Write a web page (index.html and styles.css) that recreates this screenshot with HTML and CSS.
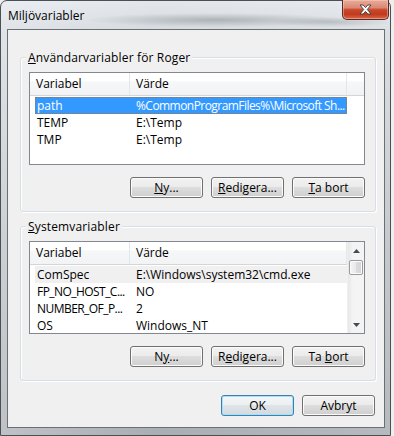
FILE: index.html
```html
<!DOCTYPE html>
<html lang="sv">
<head>
    <meta charset="UTF-8">
    <title>Miljövariabler</title>
    <link rel="stylesheet" href="styles.css">
</head>
<body>
    <div class="window">
        <div class="titlebar">
            <span class="title">Miljövariabler</span>
            <div class="close-button">
                <svg width="13" height="11" viewBox="0 0 13 11">
                    <polygon points="1,1 4.2,1 6.5,3.6 8.8,1 12,1 8.3,5.5 12,10 8.8,10 6.5,7.4 4.2,10 1,10 4.7,5.5" fill="#fff" stroke="#3a3a3a" stroke-width="0.9" stroke-linejoin="round"/>
                </svg>
            </div>
        </div>

        <div class="client">
            <div class="group">
                <div class="group-label"><u>A</u>nvändarvariabler för Roger</div>
                <div class="list">
                    <div class="list-main">
                        <div class="list-header">
                            <span class="head-cell head-name">Variabel</span>
                            <span class="head-cell head-value">Värde</span>
                            <span class="head-cell head-fill"></span>
                        </div>
                        <div class="rows">
                            <div class="row selected"><span class="cell-name">path</span><span class="cell-value tight">%CommonProgramFiles%\Microsoft Sh...</span></div>
                            <div class="row"><span class="cell-name">TEMP</span><span class="cell-value">E:\Temp</span></div>
                            <div class="row"><span class="cell-name">TMP</span><span class="cell-value">E:\Temp</span></div>
                        </div>
                    </div>
                </div>
                <div class="buttons">
                    <button class="btn"><u>N</u>y...</button>
                    <button class="btn"><u>R</u>edigera...</button>
                    <button class="btn"><u>T</u>a bort</button>
                </div>
            </div>

            <div class="group second">
                <div class="group-label"><u>S</u>ystemvariabler</div>
                <div class="list">
                    <div class="list-main">
                        <div class="list-header">
                            <span class="head-cell head-name">Variabel</span>
                            <span class="head-cell head-value">Värde</span>
                        </div>
                        <div class="rows">
                            <div class="row inactive"><span class="cell-name">ComSpec</span><span class="cell-value">E:\Windows\system32\cmd.exe</span></div>
                            <div class="row"><span class="cell-name tight">FP_NO_HOST_C...</span><span class="cell-value">NO</span></div>
                            <div class="row"><span class="cell-name tight">NUMBER_OF_P...</span><span class="cell-value">2</span></div>
                            <div class="row"><span class="cell-name">OS</span><span class="cell-value">Windows_NT</span></div>
                        </div>
                    </div>
                    <div class="scrollbar">
                        <div class="scroll-arrow">
                            <svg width="7" height="4" viewBox="0 0 7 4"><polygon points="0,4 3.5,0 7,4" fill="#4a4a4a"/></svg>
                        </div>
                        <div class="scroll-track">
                            <div class="scroll-thumb"></div>
                        </div>
                        <div class="scroll-arrow">
                            <svg width="7" height="4" viewBox="0 0 7 4"><polygon points="0,0 7,0 3.5,4" fill="#4a4a4a"/></svg>
                        </div>
                    </div>
                </div>
                <div class="buttons">
                    <button class="btn">N<u>y</u>...</button>
                    <button class="btn">R<u>e</u>digera...</button>
                    <button class="btn">Ta <u>b</u>ort</button>
                </div>
            </div>

            <div class="dialog-buttons">
                <button class="btn default">OK</button>
                <button class="btn">Avbryt</button>
            </div>
        </div>
    </div>
</body>
</html>
```

FILE: styles.css
```css
* {
    margin: 0;
    padding: 0;
    box-sizing: border-box;
}

body {
    width: 394px;
    height: 436px;
    overflow: hidden;
    background: #eeeeee;
    font-family: "Open Sans", "Noto Sans", sans-serif;
    font-size: 12px;
    color: #000;
}

u {
    text-decoration: underline;
    text-underline-offset: 1px;
}

/* window frame */

.window {
    width: 391px;
    height: 436px;
    border: 1px solid #4b5056;
    border-radius: 7px 7px 0 0;
    background:
        linear-gradient(to right, rgba(255, 255, 255, 0.25), rgba(255, 255, 255, 0) 40%, rgba(255, 255, 255, 0.15) 100%),
        linear-gradient(to bottom, #e3e7ec 0px, #d6dbe0 28px, #bcc1c6 55%, #a9aeb3 100%);
    display: flex;
    flex-direction: column;
}

.titlebar {
    height: 28px;
    display: flex;
    justify-content: space-between;
    align-items: flex-start;
    padding-left: 7px;
    background:
        radial-gradient(ellipse 130px 7px at 215px 19px, rgba(90, 95, 100, 0.35), rgba(90, 95, 100, 0)),
        radial-gradient(ellipse 60px 5px at 330px 21px, rgba(90, 95, 100, 0.25), rgba(90, 95, 100, 0));
    border-radius: 6px 6px 0 0;
}

.title {
    line-height: 29px;
    font-size: 12px;
    color: #000;
}

.close-button {
    width: 47px;
    height: 20px;
    margin-top: -1px;
    margin-right: 1px;
    border: 1px solid #5c2a20;
    border-top: none;
    border-radius: 0 0 5px 5px;
    background: linear-gradient(to bottom, #e9ab99 0%, #db8a74 40%, #c8462a 52%, #c23a1e 75%, #d9684a 100%);
    box-shadow: inset 0 0 0 1px rgba(255, 210, 200, 0.45);
    display: flex;
    align-items: center;
    justify-content: center;
}

.client {
    height: 399px;
    margin: 0 5px 0 6px;
    border: 1px solid #6a6f75;
    background: #f0f0f0;
    display: flex;
    flex-direction: column;
}

/* group boxes */

.group {
    margin: 27px 8px 0 12px;
    border: 1px solid #d5dfe5;
    border-radius: 3px;
    box-shadow: inset 1px 1px 0 #fff, 1px 1px 0 #fff;
    padding: 0 10px 13px 8px;
}

.group.second {
    margin-top: 14px;
}

.group-label {
    width: fit-content;
    margin: -8px 0 0 -3px;
    padding: 0 2px;
    line-height: 15px;
    letter-spacing: 0.15px;
    background: #f0f0f0;
}

/* list views */

.list {
    margin-top: 7px;
    height: 93px;
    border: 1px solid #828790;
    background: #fff;
    display: flex;
    overflow: hidden;
}

.list-main {
    flex: 1;
    overflow: hidden;
}

.list-header {
    height: 23px;
    display: flex;
    border-bottom: 1px solid #d5d5d5;
    background: linear-gradient(to bottom, #ffffff 0%, #ffffff 38%, #f6f7f8 39%, #f2f3f5 100%);
}

.head-cell {
    flex-shrink: 0;
    line-height: 22px;
    padding-left: 6px;
    border-right: 1px solid #e3e6ea;
}

.head-name {
    width: 100px;
}

.head-value {
    width: 217px;
}

.head-fill {
    flex: 1;
    border-right: none;
}

.rows {
    padding: 1px 0 0 5px;
}

.row {
    width: 312px;
    height: 17px;
    line-height: 15px;
    border: 1px solid transparent;
    display: flex;
    white-space: nowrap;
}

.row.selected {
    background: #3399ff;
    color: #fff;
    border: 1px dotted #a8743c;
}

.row.inactive {
    background: #f0f0f0;
}

.cell-name {
    flex-shrink: 0;
    width: 94px;
    padding-left: 1px;
    overflow: hidden;
}

.cell-value {
    flex: 1;
    padding-left: 6px;
    overflow: hidden;
}

/* long values are squeezed a little so the ellipsis stays in the column */
.tight {
    letter-spacing: -0.55px;
}

/* scrollbar */

.scrollbar {
    width: 17px;
    display: flex;
    flex-direction: column;
    background: linear-gradient(to right, #e7e7e7, #f4f4f4 30%, #f4f4f4);
    border-left: 1px solid #f0f0f0;
}

.scroll-arrow {
    height: 17px;
    display: flex;
    align-items: center;
    justify-content: center;
}

.scroll-track {
    flex: 1;
    padding: 1px 1px 0 1px;
}

.scroll-thumb {
    height: 15px;
    border: 1px solid #9a9a9a;
    border-radius: 2px;
    background: linear-gradient(to right, #f4f4f4, #e9e9ea 50%, #dcdcdd 51%, #d4d4d6);
    box-shadow: inset 0 0 0 1px #fcfcfc;
}

/* buttons */

.buttons,
.dialog-buttons {
    display: flex;
    justify-content: flex-end;
    gap: 8px;
}

.buttons {
    margin-top: 12px;
}

.dialog-buttons {
    margin: 14px 9px 0 0;
}

.btn {
    width: 73px;
    height: 21px;
    border: 1px solid #707070;
    border-radius: 3px;
    background: linear-gradient(to bottom, #f2f2f2 0%, #ebebeb 49%, #dddddd 50%, #cfcfcf 100%);
    box-shadow: inset 0 0 0 1px #fbfbfb;
    font-family: inherit;
    font-size: 12px;
    color: #000;
    line-height: 18px;
}

.btn.default {
    border-color: #3c7fb1;
    box-shadow: inset 0 0 0 1px #a7e1f8;
    background: linear-gradient(to bottom, #f4f6f7 0%, #ecf0f2 49%, #dee4e7 50%, #d3dade 100%);
}
```
